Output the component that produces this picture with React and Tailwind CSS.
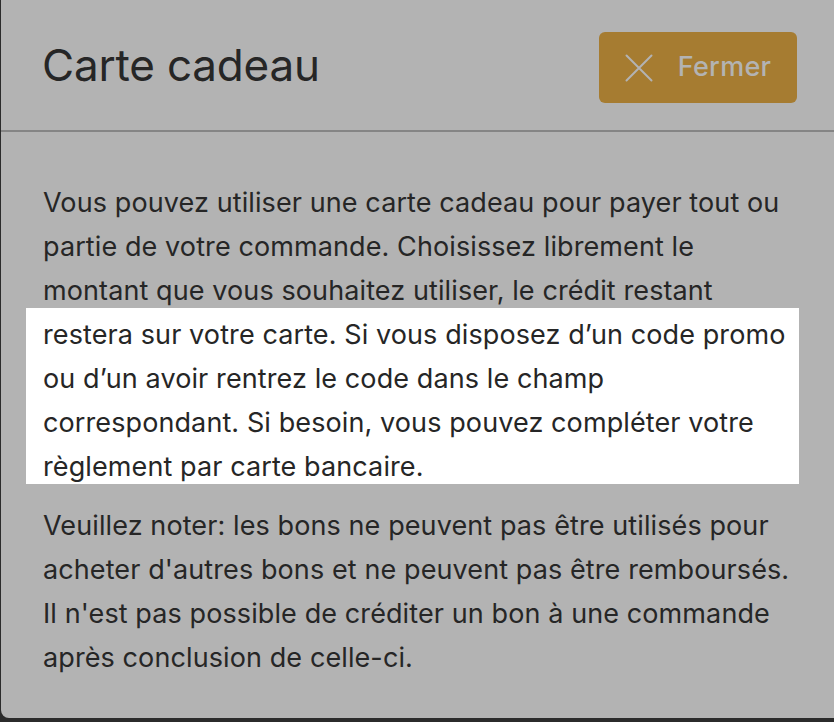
import React from "react";

function CloseIcon() {
  return (
    <svg width="28" height="28" viewBox="0 0 28 28" fill="none">
      <path d="M1.5 1.5L26.5 26.5M26.5 1.5L1.5 26.5" stroke="#b3b3b3" strokeWidth="2" strokeLinecap="round" />
    </svg>
  );
}

export default function App() {
  return (
    <div className="w-[834px] h-[722px] bg-[#2b2b2b] pl-px overflow-hidden" style={{ fontFamily: "Inter, 'Liberation Sans', sans-serif" }}>
      <div className="h-[718px] bg-[#b3b3b3] rounded-bl-lg text-[#262626]">
        {/* Header */}
        <div className="h-[130px] flex items-center justify-between pl-[41px] pr-[37px] border-b-2 border-[#858585] box-content">
          <h1 className="text-[44px] font-normal tracking-[-0.2px]">Carte cadeau</h1>
          <button className="mt-[5px] w-[198px] h-[71px] rounded-md bg-[#a67c31] flex items-center justify-center gap-[25px] text-[#b3b3b3] text-[27px] font-medium tracking-[0.3px]">
            <CloseIcon />
            <span>Fermer</span>
          </button>
        </div>

        {/* Body */}
        <div className="px-[42px] pt-[49px] text-[27px] leading-[44px] tracking-[0.1px]">
          <p>Vous pouvez utiliser une carte cadeau pour payer tout ou partie de votre commande. Choisissez librement le montant que vous souhaitez utiliser, le crédit restant</p>
          <p className="bg-white -ml-[17px] -mr-[7px] pl-[17px] pr-[7px] -mt-[5px] pb-[5px] mb-[20px]">
            <span className="block -mb-[5px] relative top-[5px]">restera sur votre carte. Si vous disposez d’un code promo ou d’un avoir rentrez le code dans le champ correspondant. Si besoin, vous pouvez compléter votre règlement par carte bancaire.</span>
          </p>
          <p>Veuillez noter: les bons ne peuvent pas être utilisés pour acheter d'autres bons et ne peuvent pas être remboursés. Il n'est pas possible de créditer un bon à une commande après conclusion de celle-ci.</p>
        </div>
      </div>
    </div>
  );
}
